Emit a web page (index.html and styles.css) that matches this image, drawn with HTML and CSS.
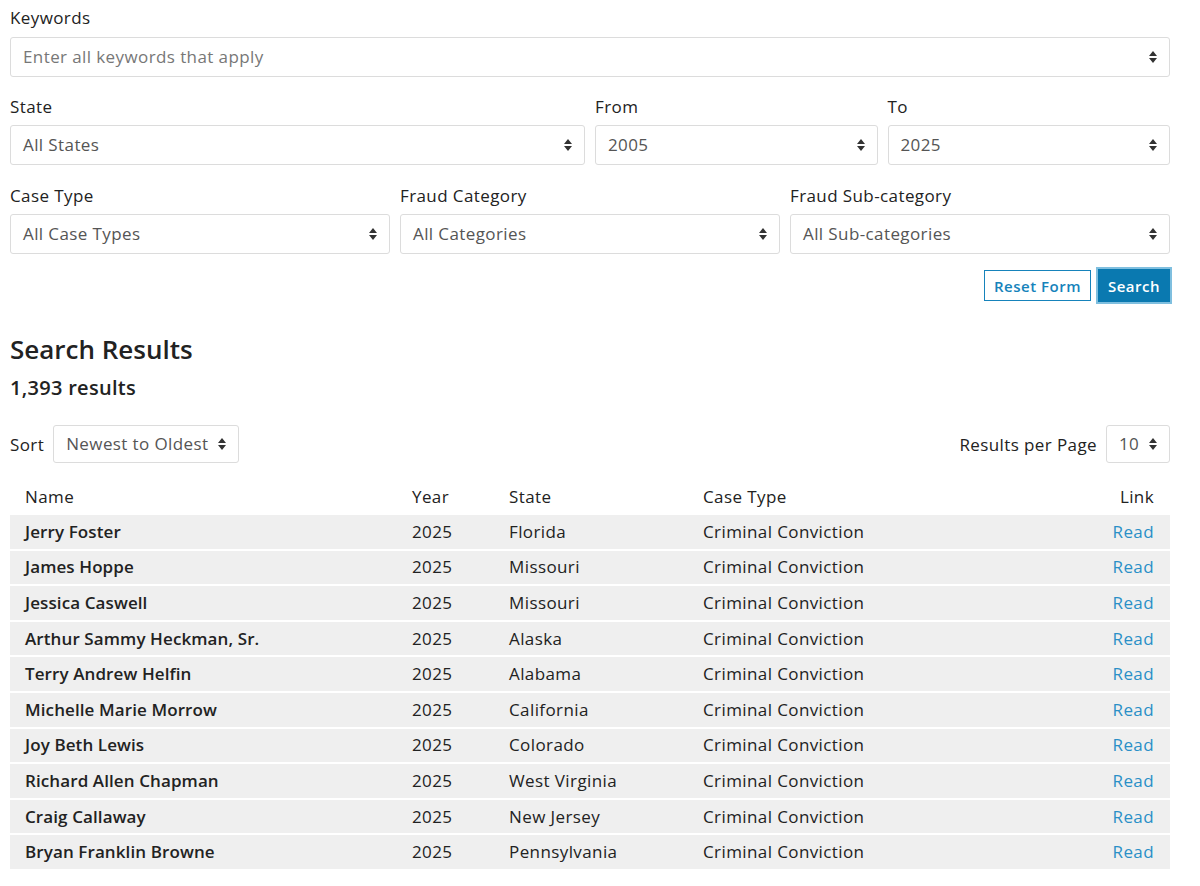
FILE: index.html
```html
<!DOCTYPE html>
<html lang="en">
<head>
    <meta charset="UTF-8">
    <meta name="viewport" content="width=device-width, initial-scale=1.0">
    <title>Case Search</title>
    <link rel="stylesheet" href="styles.css">
</head>
<body>
    <div class="page">
        <form class="search-form">
            <div class="field">
                <label class="first">Keywords</label>
                <div class="select-wrap">
                    <div class="select placeholder">Enter all keywords that apply</div>
                    <svg class="arrows" width="8" height="12" viewBox="0 0 8 12"><path d="M4 0 L8 5 H0 Z M0 7 H8 L4 12 Z"/></svg>
                </div>
            </div>
            <div class="row row-dates">
                <div class="field">
                    <label>State</label>
                    <div class="select-wrap">
                        <div class="select">All States</div>
                        <svg class="arrows" width="8" height="12" viewBox="0 0 8 12"><path d="M4 0 L8 5 H0 Z M0 7 H8 L4 12 Z"/></svg>
                    </div>
                </div>
                <div class="field">
                    <label>From</label>
                    <div class="select-wrap">
                        <div class="select">2005</div>
                        <svg class="arrows" width="8" height="12" viewBox="0 0 8 12"><path d="M4 0 L8 5 H0 Z M0 7 H8 L4 12 Z"/></svg>
                    </div>
                </div>
                <div class="field">
                    <label>To</label>
                    <div class="select-wrap">
                        <div class="select">2025</div>
                        <svg class="arrows" width="8" height="12" viewBox="0 0 8 12"><path d="M4 0 L8 5 H0 Z M0 7 H8 L4 12 Z"/></svg>
                    </div>
                </div>
            </div>
            <div class="row row-types">
                <div class="field">
                    <label>Case Type</label>
                    <div class="select-wrap">
                        <div class="select">All Case Types</div>
                        <svg class="arrows" width="8" height="12" viewBox="0 0 8 12"><path d="M4 0 L8 5 H0 Z M0 7 H8 L4 12 Z"/></svg>
                    </div>
                </div>
                <div class="field">
                    <label>Fraud Category</label>
                    <div class="select-wrap">
                        <div class="select">All Categories</div>
                        <svg class="arrows" width="8" height="12" viewBox="0 0 8 12"><path d="M4 0 L8 5 H0 Z M0 7 H8 L4 12 Z"/></svg>
                    </div>
                </div>
                <div class="field">
                    <label>Fraud Sub-category</label>
                    <div class="select-wrap">
                        <div class="select">All Sub-categories</div>
                        <svg class="arrows" width="8" height="12" viewBox="0 0 8 12"><path d="M4 0 L8 5 H0 Z M0 7 H8 L4 12 Z"/></svg>
                    </div>
                </div>
            </div>
            <div class="actions">
                <button type="button" class="btn btn-outline">Reset Form</button>
                <button type="button" class="btn btn-primary">Search</button>
            </div>
        </form>

        <h2 class="results-title">Search Results</h2>
        <p class="results-count">1,393 results</p>

        <div class="toolbar">
            <div class="toolbar-item">
                <span>Sort</span>
                <div class="select-wrap small sort">
                    <div class="select">Newest to Oldest</div>
                    <svg class="arrows" width="8" height="12" viewBox="0 0 8 12"><path d="M4 0 L8 5 H0 Z M0 7 H8 L4 12 Z"/></svg>
                </div>
            </div>
            <div class="toolbar-item">
                <span>Results per Page</span>
                <div class="select-wrap small per-page">
                    <div class="select">10</div>
                    <svg class="arrows" width="8" height="12" viewBox="0 0 8 12"><path d="M4 0 L8 5 H0 Z M0 7 H8 L4 12 Z"/></svg>
                </div>
            </div>
        </div>

        <table class="results">
            <thead>
                <tr>
                    <th class="col-name">Name</th>
                    <th class="col-year">Year</th>
                    <th class="col-state">State</th>
                    <th class="col-type">Case Type</th>
                    <th class="col-link">Link</th>
                </tr>
            </thead>
            <tbody>
                <tr><td class="col-name">Jerry Foster</td><td>2025</td><td>Florida</td><td>Criminal Conviction</td><td class="col-link"><a href="#">Read</a></td></tr>
                <tr><td class="col-name">James Hoppe</td><td>2025</td><td>Missouri</td><td>Criminal Conviction</td><td class="col-link"><a href="#">Read</a></td></tr>
                <tr><td class="col-name">Jessica Caswell</td><td>2025</td><td>Missouri</td><td>Criminal Conviction</td><td class="col-link"><a href="#">Read</a></td></tr>
                <tr><td class="col-name">Arthur Sammy Heckman, Sr.</td><td>2025</td><td>Alaska</td><td>Criminal Conviction</td><td class="col-link"><a href="#">Read</a></td></tr>
                <tr><td class="col-name">Terry Andrew Helfin</td><td>2025</td><td>Alabama</td><td>Criminal Conviction</td><td class="col-link"><a href="#">Read</a></td></tr>
                <tr><td class="col-name">Michelle Marie Morrow</td><td>2025</td><td>California</td><td>Criminal Conviction</td><td class="col-link"><a href="#">Read</a></td></tr>
                <tr><td class="col-name">Joy Beth Lewis</td><td>2025</td><td>Colorado</td><td>Criminal Conviction</td><td class="col-link"><a href="#">Read</a></td></tr>
                <tr><td class="col-name">Richard Allen Chapman</td><td>2025</td><td>West Virginia</td><td>Criminal Conviction</td><td class="col-link"><a href="#">Read</a></td></tr>
                <tr><td class="col-name">Craig Callaway</td><td>2025</td><td>New Jersey</td><td>Criminal Conviction</td><td class="col-link"><a href="#">Read</a></td></tr>
                <tr><td class="col-name">Bryan Franklin Browne</td><td>2025</td><td>Pennsylvania</td><td>Criminal Conviction</td><td class="col-link"><a href="#">Read</a></td></tr>
            </tbody>
        </table>
    </div>
</body>
</html>
```

FILE: styles.css
```css
body {
    margin: 0;
    font-family: "Open Sans", "Noto Sans", Arial, sans-serif;
    font-size: 17px;
    letter-spacing: 0.4px;
    color: #222;
    background-color: #fff;
}
.page {
    width: 1160px;
    margin-left: 10px;
    padding-top: 6px;
}

/* filter form */
.field label {
    display: block;
    line-height: 24px;
    margin-bottom: 6px;
}
.field label.first {
    margin-bottom: 7px;
}
.row {
    display: grid;
    gap: 10px;
    margin-top: 18px;
}
.row-dates {
    grid-template-columns: 575px 1fr 1fr;
}
.row-types {
    grid-template-columns: 1fr 1fr 1fr;
    margin-top: 19px;
}
.select-wrap {
    position: relative;
}
.select {
    height: 38px;
    line-height: 38px;
    padding: 0 30px 0 12px;
    border: 1px solid #dcdcdc;
    border-radius: 3px;
    color: #555;
    background-color: #fff;
    white-space: nowrap;
}
.select.placeholder {
    color: #777;
}
.arrows {
    position: absolute;
    right: 13px;
    top: 14px;
    fill: #333;
}
.actions {
    display: flex;
    justify-content: flex-end;
    gap: 7px;
    margin-top: 15px;
}
.btn {
    font-family: inherit;
    font-size: 15px;
    font-weight: 600;
    letter-spacing: 0.5px;
    height: 31px;
    padding: 0 9px;
    border-radius: 0;
    cursor: pointer;
}
.btn-outline {
    color: #1683bb;
    background-color: #fff;
    border: 1px solid #1683bb;
    margin-top: 1px;
}
.btn-primary {
    color: #fff;
    background-color: #0a79b0;
    border: 1px solid #0a79b0;
    height: 33px;
    box-shadow: 0 0 0 2px #7fbfdf;
    padding: 0 9px;
}

/* results */
.results-title {
    font-size: 26px;
    font-weight: 600;
    line-height: 32px;
    letter-spacing: 0;
    margin: 31px 0 0;
}
.results-count {
    font-size: 20px;
    font-weight: 600;
    line-height: 26px;
    letter-spacing: 0.3px;
    margin: 10px 0 0;
}
.toolbar {
    display: flex;
    justify-content: space-between;
    align-items: center;
    margin-top: 24px;
}
.toolbar-item {
    display: flex;
    align-items: center;
    gap: 9px;
}
.select-wrap.small .select {
    height: 36px;
    line-height: 36px;
}
.select-wrap.small .arrows {
    top: 13px;
}
.sort .select {
    width: 142px;
}
.per-page .select {
    width: 20px;
}

.results {
    width: 100%;
    border-collapse: collapse;
    margin-top: 16px;
}
.results th {
    font-weight: 400;
    text-align: left;
    padding: 8px 0 9px;
    line-height: 19px;
}
.results td {
    background-color: #efefef;
    border-bottom: 2px solid #fff;
    padding: 0;
    height: 33.6px;
    line-height: 20px;
}
.results .col-name {
    padding-left: 15px;
    width: 387px;
}
.results td.col-name {
    font-weight: 600;
    letter-spacing: 0.1px;
}
.results .col-year {
    width: 97px;
}
.results .col-state {
    width: 194px;
}
.results .col-link {
    text-align: right;
    padding-right: 16px;
}
.results a {
    color: #2a8fc7;
    text-decoration: none;
}
```
